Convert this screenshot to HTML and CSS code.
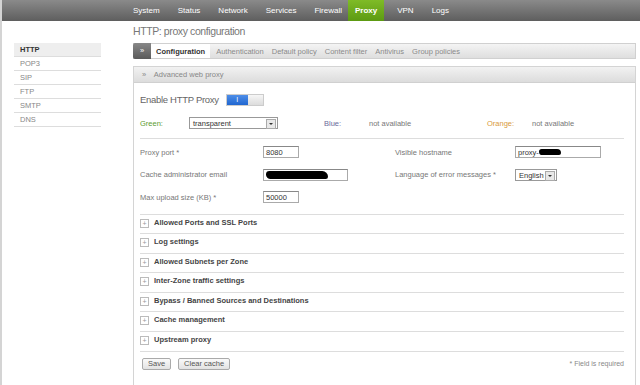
FILE: index.html
```html
<!DOCTYPE html>
<html lang="en">
<head>
    <meta charset="UTF-8">
    <title>HTTP: proxy configuration</title>
    <link rel="stylesheet" href="styles.css">
</head>
<body>

    <div class="topbar">
        <a>System</a>
        <a>Status</a>
        <a>Network</a>
        <a>Services</a>
        <a>Firewall</a>
        <a class="active">Proxy</a>
        <a>VPN</a>
        <a>Logs</a>
    </div>

    <div class="page">
        <h1 class="title">HTTP: proxy configuration</h1>

        <ul class="sidebar">
            <li class="current">HTTP</li>
            <li>POP3</li>
            <li>SIP</li>
            <li>FTP</li>
            <li>SMTP</li>
            <li>DNS</li>
        </ul>

        <div class="main">
            <div class="tabs">
                <span class="tab-arrow">&raquo;</span>
                <span class="tab active">Configuration</span>
                <span class="tab">Authentication</span>
                <span class="tab">Default policy</span>
                <span class="tab">Content filter</span>
                <span class="tab">Antivirus</span>
                <span class="tab">Group policies</span>
            </div>

            <div class="panel">
                <div class="panel-head"><span class="raquo">&raquo;</span> Advanced web proxy</div>
                <div class="panel-body">
                    <div class="enable">
                        <span>Enable HTTP Proxy</span>
                        <span class="toggle"><span class="on">I</span><span class="off"></span></span>
                    </div>

                    <div class="zones">
                        <span class="green">Green:</span>
                        <span class="select wide">transparent<i class="arrow"></i></span>
                        <span class="blue">Blue:</span>
                        <span>not available</span>
                        <span class="orange">Orange:</span>
                        <span>not available</span>
                    </div>

                    <div class="fields">
                        <label>Proxy port *</label>
                        <span class="input short">8080</span>
                        <label>Visible hostname</label>
                        <span class="input host">proxy-<b class="blot"></b></span>

                        <label>Cache administrator email</label>
                        <span class="input mail"><b class="blot big"></b></span>
                        <label>Language of error messages *</label>
                        <span class="select small">English<i class="arrow"></i></span>

                        <label>Max upload size (KB) *</label>
                        <span class="input short">50000</span>
                    </div>

                    <ul class="sections">
                        <li><span class="plus">+</span>Allowed Ports and SSL Ports</li>
                        <li><span class="plus">+</span>Log settings</li>
                        <li><span class="plus">+</span>Allowed Subnets per Zone</li>
                        <li><span class="plus">+</span>Inter-Zone traffic settings</li>
                        <li><span class="plus">+</span>Bypass / Banned Sources and Destinations</li>
                        <li><span class="plus">+</span>Cache management</li>
                        <li><span class="plus">+</span>Upstream proxy</li>
                    </ul>

                    <div class="actions">
                        <button>Save</button>
                        <button>Clear cache</button>
                        <span class="note">* Field is required</span>
                    </div>
                </div>
            </div>
        </div>
    </div>

</body>
</html>
```

FILE: styles.css
```css
body {
    font-family: 'Liberation Sans', Arial, sans-serif;
    font-size: 7.5px;
    color: #666;
    margin: 0;
    padding: 0;
    background: #fff;
    border-left: 2px solid #d4d4d4;
    min-height: 385px;
    box-sizing: border-box;
    overflow: hidden;
}
.topbar {
    height: 21px;
    display: flex;
    align-items: stretch;
    padding-left: 124px;
    background: linear-gradient(#8a8a8a, #5e5e5e);
    margin-left: -2px;
}
.topbar a {
    color: #fff;
    padding: 0 9px;
    line-height: 21px;
    font-size: 8px;
}
.topbar a.active {
    background: linear-gradient(#7fbb27, #5c9a12);
    font-weight: bold;
    padding: 0 7px;
    margin: 0 4px 0 -3px;
}
.page {
    display: grid;
    grid-template-columns: 87px 503px;
    column-gap: 32px;
    padding-left: 12px;
}
.title {
    grid-column: 2;
    margin: 0;
    height: 22px;
    line-height: 20px;
    font-size: 10.5px;
    letter-spacing: -0.4px;
    font-weight: normal;
    color: #777;
}
.sidebar {
    grid-column: 1;
    grid-row: 2;
    list-style: none;
    margin: 0;
    padding: 0;
}
.sidebar li {
    height: 13px;
    line-height: 13px;
    padding-left: 6px;
    border-bottom: 1px solid #ddd;
    color: #888;
}
.sidebar li.current {
    background: #eee;
    color: #333;
    font-weight: bold;
}
.main {
    grid-column: 2;
    grid-row: 2;
}
.tabs {
    height: 16px;
    display: flex;
    align-items: stretch;
    background: linear-gradient(#f4f4f4, #dedede);
    border: 1px solid #d0d0d0;
    border-left: none;
    box-sizing: border-box;
    color: #8a8a8a;
}
.tab-arrow {
    width: 18px;
    background: linear-gradient(#888, #5a5a5a);
    color: #fff;
    text-align: center;
    line-height: 15px;
    margin-top: -1px;
    margin-bottom: -1px;
    border-radius: 2px 0 0 2px;
}
.tab {
    padding: 0 4px;
    line-height: 15px;
}
.tab.active {
    background: #fff;
    color: #333;
    font-weight: bold;
    padding: 0 5px;
    margin-right: 2px;
}
.panel {
    margin-top: 7px;
    border: 1px solid #d4d4d4;
    height: 330px;
    box-sizing: border-box;
}
.panel-head {
    height: 15px;
    line-height: 15px;
    padding-left: 8px;
    background: linear-gradient(#f2f2f2, #dcdcdc);
    border-bottom: 1px solid #d0d0d0;
    color: #888;
}
.raquo {
    margin-right: 6px;
}
.panel-body {
    padding: 0 11px 0 6px;
}
.enable {
    display: flex;
    align-items: center;
    gap: 7px;
    height: 27px;
    margin-top: 3px;
    font-size: 9.5px;
    letter-spacing: -0.3px;
    color: #666;
}
.toggle {
    display: flex;
    height: 10px;
    border: 1px solid #ccc;
}
.toggle .on {
    width: 21px;
    background: linear-gradient(#4e8ee8, #2066d0);
    color: #fff;
    font-size: 7px;
    line-height: 10px;
    text-align: center;
}
.toggle .off {
    width: 15px;
    background: linear-gradient(#f6f6f6, #dcdcdc);
}
.zones {
    display: grid;
    grid-template-columns: 49px 135px 45px 118px 45px auto;
    align-items: center;
    height: 14px;
    padding: 3px 0 8px;
    border-bottom: 1px solid #ddd;
    color: #777;
}
.green { color: #5c9c33; }
.blue { color: #6a6a9a; }
.orange { color: #d99a3a; }
.select {
    position: relative;
    display: block;
    height: 12px;
    line-height: 11px;
    border: 1px solid #999;
    box-sizing: border-box;
    padding-left: 3px;
    color: #333;
    background: #fff;
}
.select.wide { width: 89px; }
.select.small { width: 42px; }
.arrow {
    position: absolute;
    right: 1px;
    top: 1px;
    width: 8px;
    height: 8px;
    border: 1px solid #aaa;
    background: #e8e8e8;
}
.arrow::after {
    content: "";
    position: absolute;
    left: 2px;
    top: 3px;
    border: 2px solid transparent;
    border-top: 2px solid #333;
}
.fields {
    display: grid;
    grid-template-columns: 123px 132px 120px auto;
    grid-auto-rows: 22.5px;
    align-items: center;
    padding: 2px 0 5px;
    border-bottom: 1px solid #ddd;
    color: #777;
}
.input {
    display: flex;
    align-items: center;
    height: 12px;
    border: 1px solid #aaa;
    border-top-color: #888;
    box-sizing: border-box;
    padding-left: 2px;
    color: #333;
    background: #fff;
}
.input.short { width: 36px; }
.input.mail { width: 85px; }
.input.host { width: 86px; }
.blot {
    display: inline-block;
    width: 22px;
    height: 6px;
    background: #000;
    border-radius: 4px 6px 3px 5px;
}
.blot.big {
    width: 62px;
    height: 8px;
    border-radius: 6px 10px 4px 8px;
}
.sections {
    list-style: none;
    margin: 0;
    padding: 0;
}
.sections li {
    height: 19.6px;
    box-sizing: border-box;
    line-height: 15px;
    border-bottom: 1px solid #ddd;
    font-weight: bold;
    color: #444;
    display: flex;
    align-items: flex-start;
}
.plus {
    width: 7px;
    height: 7px;
    margin: 4px 5px 0 0;
    border: 1px solid #bbb;
    font-size: 7px;
    line-height: 7px;
    text-align: center;
    font-weight: normal;
    color: #999;
}
.actions {
    display: flex;
    align-items: center;
    padding: 6px 0 0 2px;
    gap: 7px;
}
.actions button {
    font-family: inherit;
    font-size: 7.5px;
    color: #555;
    height: 12px;
    padding: 0 5px;
    border: 1px solid #aaa;
    border-radius: 2px;
    background: linear-gradient(#fafafa, #e2e2e2);
    cursor: pointer;
}
.note {
    margin-left: auto;
    color: #888;
    font-size: 7px;
}
```
